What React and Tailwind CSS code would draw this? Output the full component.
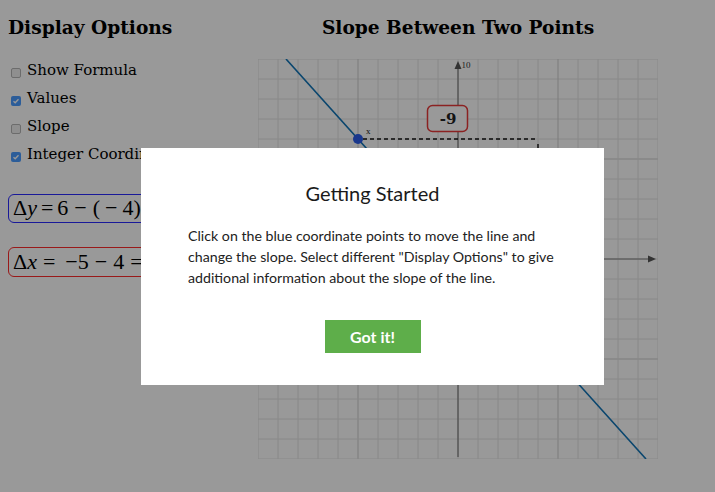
import React from 'react';

const OPTIONS = [
  { label: 'Show Formula', checked: false },
  { label: 'Values', checked: true },
  { label: 'Slope', checked: false },
  { label: 'Integer Coordinates', checked: true },
];

const serif = "font-['DejaVu_Serif',serif]";
const lato = "font-['Lato','Open_Sans',sans-serif]";
const math = "font-['Liberation_Serif','Times_New_Roman',serif]";

function Checkbox({ checked }) {
  if (checked) {
    return (
      <span className="w-[10px] h-[10px] rounded-[2px] bg-[#4a9bff] flex items-center justify-center shrink-0">
        <svg width="8" height="8" viewBox="0 0 8 8">
          <path d="M1.5 4.2 L3.2 5.8 L6.5 2.2" fill="none" stroke="#fff" strokeWidth="1.3" />
        </svg>
      </span>
    );
  }
  return <span className="block w-[10px] h-[10px] rounded-[2px] border border-[#b4b4b4] bg-[#efefef] shrink-0" />;
}

// 400x400 graph, 20px per unit, origin at the centre
function Graph() {
  const ticks = Array.from({ length: 21 }, (_, i) => i * 20);
  const px = (x) => 200 + x * 20;
  const py = (y) => 200 - y * 20;
  const p1 = { x: -5, y: 6 };
  const p2 = { x: 4, y: -4 };
  const m = (p2.y - p1.y) / (p2.x - p1.x);
  const xAt = (y) => p1.x + (y - p1.y) / m;

  return (
    <svg width="400" height="400" viewBox="0 0 400 400" className="block">
      {ticks.map((t, i) => (
        <g key={t}>
          <line x1={t} y1="0" x2={t} y2="400" stroke={i === 5 || i === 15 ? '#cdcdcd' : '#e4e4e4'} strokeWidth="1" />
          <line x1="0" y1={t} x2="400" y2={t} stroke={i === 5 || i === 15 ? '#cdcdcd' : '#e4e4e4'} strokeWidth="1" />
        </g>
      ))}

      {/* axes */}
      <line x1="200" y1="8" x2="200" y2="398" stroke="#7a7a7a" strokeWidth="1.2" />
      <line x1="2" y1="200" x2="392" y2="200" stroke="#7a7a7a" strokeWidth="1.2" />
      <path d="M200 2 L196.5 10 L203.5 10 Z" fill="#555" />
      <path d="M398 200 L390 196.5 L390 203.5 Z" fill="#555" />
      <text x="203.5" y="9" fontSize="9" fill="#333" fontFamily="Liberation Serif, serif">10</text>

      {/* rise / run guides */}
      <line x1={px(p1.x) + 5} y1={py(p1.y)} x2={px(p2.x)} y2={py(p1.y)} stroke="#111" strokeWidth="1.4" strokeDasharray="4 3" />
      <line x1={px(p2.x)} y1={py(p1.y) + 5} x2={px(p2.x)} y2={py(p2.y)} stroke="#111" strokeWidth="1.4" strokeDasharray="4 3" />

      {/* line through the two points */}
      <line x1={px(xAt(10))} y1="0" x2={px(xAt(-10))} y2="400" stroke="#1175b7" strokeWidth="1.6" />

      <circle cx={px(p1.x)} cy={py(p1.y)} r="5" fill="#2a5ce9" />
      <circle cx={px(p2.x)} cy={py(p2.y)} r="5" fill="#2a5ce9" />
      <text x={px(p1.x) + 8} y={py(p1.y) - 5} fontSize="9" fill="#222" fontFamily="Liberation Serif, serif">x</text>

      {/* run label */}
      <rect x="169.5" y="46.5" width="40" height="26" rx="5" fill="#fff" stroke="#e83a3a" strokeWidth="1.5" />
      <text x="190" y="65" textAnchor="middle" fontSize="15" fontWeight="bold" fill="#222" fontFamily="DejaVu Serif, serif">-9</text>

      {/* rise label */}
      <rect x="286.5" y="166.5" width="40" height="26" rx="5" fill="#fff" stroke="#3a3aff" strokeWidth="1.5" />
      <text x="306" y="185" textAnchor="middle" fontSize="15" fontWeight="bold" fill="#222" fontFamily="DejaVu Serif, serif">10</text>
    </svg>
  );
}

export default function App() {
  return (
    <div className="relative w-[715px] h-[492px] bg-white overflow-hidden text-black">
      <div className="flex">
        {/* Display options */}
        <aside className="w-[258px] shrink-0 pl-2 pt-4">
          <h2 className={`${serif} font-bold text-[18.6px] leading-6 h-6`}>Display Options</h2>
          <ul className="mt-4">
            {OPTIONS.map((o) => (
              <li key={o.label} className="flex items-center gap-[6px] h-7 pl-[3px]">
                <span className="pt-[5px]"><Checkbox checked={o.checked} /></span>
                <span className={`${serif} text-[15px] whitespace-nowrap`}>{o.label}</span>
              </li>
            ))}
          </ul>

          <div className="mt-[26px] flex flex-col gap-6">
            <div className={`${math} text-[22px] leading-[26px] h-[29px] w-fit border-[1.5px] border-[#2a2aff] rounded-[6px] pl-[4px] pr-3 whitespace-nowrap`}>
              Δ<i>y</i><span className="mx-[4px]">=</span>6<span className="mx-[6px]">−</span>(<span className="mx-[5px]">−</span>4)<span className="mx-[5px]">=</span>10
            </div>
            <div className={`${math} text-[22px] leading-[27px] h-[30px] w-fit border-[1.5px] border-[#ff2a2a] rounded-[6px] pl-[4px] pr-3 whitespace-nowrap`}>
              Δ<i>x</i><span className="ml-[6px] mr-[10px]">=</span>−5<span className="mx-[6px]">−</span>4<span className="mx-[6px]">=</span>−9
            </div>
          </div>
        </aside>

        {/* Graph */}
        <main className="w-[400px] shrink-0 pt-4">
          <h1 className={`${serif} font-bold text-[18.6px] leading-6 h-6 text-center`}>Slope Between Two Points</h1>
          <div className="mt-[19px]">
            <Graph />
          </div>
        </main>
      </div>

      {/* Backdrop */}
      <div className="absolute inset-0 bg-black/40" />

      {/* Getting started dialog */}
      <div className={`${lato} absolute left-[141px] top-[148px] w-[463px] h-[237px] bg-white pt-[33px]`}>
        <h3 className="text-[20px] leading-6 text-center text-[#1a1a1a]">Getting Started</h3>
        <p className="mt-5 pl-[47px] pr-[40px] text-[14.2px] leading-[21px] text-[#222]">
          Click on the blue coordinate points to move the line and change the slope. Select different "Display Options" to give additional information about the slope of the line.
        </p>
        <div className="mt-8 flex justify-center">
          <button className="w-[96px] h-[33px] bg-[#5eae4a] text-white font-bold text-[16px]">Got it!</button>
        </div>
      </div>
    </div>
  );
}
